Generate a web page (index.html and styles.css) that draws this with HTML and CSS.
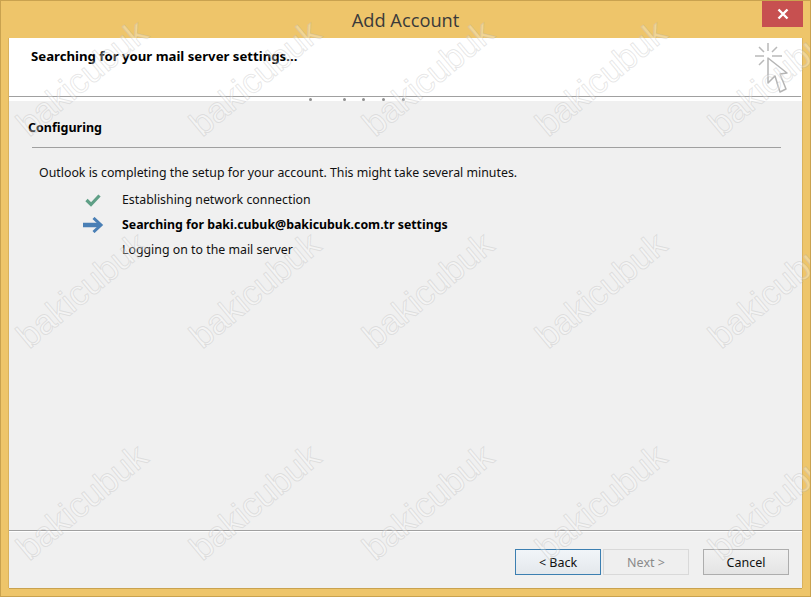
FILE: index.html
```html
<!DOCTYPE html>
<html lang="en">
<head>
<meta charset="utf-8">
<title>Add Account</title>
<link rel="stylesheet" href="styles.css">
</head>
<body>
<div class="window">
  <div class="titlebar">
    <div class="title">Add Account</div>
    <div class="close">
      <svg width="12" height="12" viewBox="0 0 12 12"><path d="M1.5 1.5L10.500 10.500M10.500 1.500L1.500 10.500" stroke="#fff" stroke-width="2.400" fill="none"/></svg>
    </div>
  </div>
  <div class="dialog">
    <div class="header">
      <div class="heading">Searching for your mail server settings...</div>
      <svg class="cursor" width="36" height="56" viewBox="0 0 36 56">
        <g stroke="#b9b9b9" stroke-width="1.500" fill="none">
          <path d="M15 0V8M2 13H11M19 13H29M6 4L11 9M24 4L19 9M6 22L11 17"/>
        </g>
        <path d="M15 15V40L22 33L27 49L33 46L27 31L34 30Z" fill="#fff" stroke="#b5b5b5" stroke-width="1.500" stroke-linejoin="round"/>
      </svg>
      <div class="rule"></div>
      <div class="dots"><i></i><i class="d2"></i><i class="d3"></i><i class="d3"></i><i class="d3"></i></div>
    </div>
    <div class="body">
      <div class="section">Configuring</div>
      <div class="section-rule"></div>
      <p class="intro">Outlook is completing the setup for your account. This might take several minutes.</p>
      <ul class="steps">
        <li>
          <span class="ico"><svg width="20" height="14" viewBox="0 0 20 14"><path d="M3.500 7L8 11.500L16.500 2.500" stroke="#5f9f86" stroke-width="3.200" fill="none"/></svg></span>
          <span>Establishing network connection</span>
        </li>
        <li class="current">
          <span class="ico"><svg width="22" height="16" viewBox="0 0 22 16"><path d="M1 8H18" stroke="#4a7fb5" stroke-width="4.500" fill="none"/><path d="M11.500 1L19 8L11.500 15" stroke="#4a7fb5" stroke-width="3" fill="none"/></svg></span>
          <span>Searching for baki.cubuk@bakicubuk.com.tr settings</span>
        </li>
        <li>
          <span class="ico"></span>
          <span>Logging on to the mail server</span>
        </li>
      </ul>
    </div>
    <div class="footer">
      <button class="btn focus">&lt; Back</button>
      <button class="btn off">Next &gt;</button>
      <button class="btn cancel">Cancel</button>
    </div>
  </div>
  <div class="marks" aria-hidden="true">
    <span>bakicubuk</span><span>bakicubuk</span><span>bakicubuk</span><span>bakicubuk</span><span>bakicubuk</span>
    <span>bakicubuk</span><span>bakicubuk</span><span>bakicubuk</span><span>bakicubuk</span><span>bakicubuk</span>
    <span>bakicubuk</span><span>bakicubuk</span><span>bakicubuk</span><span>bakicubuk</span><span>bakicubuk</span>
  </div>
</div>
</body>
</html>
```

FILE: styles.css
```css
* { box-sizing: border-box; }
html, body { margin: 0; padding: 0; overflow: hidden; }
body { width: 811px; height: 597px; font-family: "Noto Sans", "Open Sans", sans-serif; }
.window {
  position: relative;
  width: 811px;
  height: 597px;
  background: #eec56a;
  border: 1px solid #c9a24f;
  padding: 0 8px 8px 8px;
  display: flex;
  flex-direction: column;
  overflow: hidden;
}
.titlebar {
  height: 37px;
  flex: none;
  position: relative;
  display: flex;
  justify-content: center;
}
.title {
  font-family: "Open Sans", sans-serif;
  font-size: 18.300px;
  line-height: 24px;
  margin-top: 7px;
  color: #3a3a3a;
}
.close {
  position: absolute;
  top: 0;
  right: -1px;
  width: 41px;
  height: 26px;
  background: #c75050;
  display: flex;
  align-items: center;
  justify-content: center;
}
.dialog {
  flex: 1;
  display: flex;
  flex-direction: column;
  background: #f0f0f0;
  box-shadow: 0 1px 0 #c9a24f, -1px 0 0 #d9b25e, 1px 0 0 #d9b25e;
  min-height: 0;
}
.header {
  position: relative;
  height: 63px;
  flex: none;
  background: #fff;
  padding: 10px 22px 0;
}
.heading {
  font-size: 13.200px;
  font-weight: 700;
  line-height: 17px;
  color: #000;
}
.cursor { position: absolute; top: 5px; right: 13px; }
.rule {
  position: absolute;
  left: 0;
  right: 1px;
  top: 58px;
  height: 1px;
  background: #a0a0a0;
}
.dots {
  position: absolute;
  left: 300px;
  top: 60px;
  display: flex;
}
.dots i { width: 3px; height: 3px; border-radius: 50%; background: #8f8f8f; margin-right: 31px; }
.dots .d2 { margin-right: 16px; }
.dots .d3 { margin-right: 17px; }
.body { flex: 1; padding: 18px 21px 0 19px; }
.section {
  font-size: 12.500px;
  font-weight: 700;
  line-height: 17px;
  color: #000;
}
.section-rule {
  height: 1px;
  background: #a0a0a0;
  margin: 11px 0 0 4px;
}
.intro {
  margin: 16px 0 0 11px;
  font-size: 12.350px;
  line-height: 17px;
  color: #111;
}
.steps { list-style: none; margin: 6px 0 0 0; padding: 0 0 0 46px; }
.steps li {
  display: flex;
  align-items: center;
  height: 25px;
  font-size: 12.350px;
  color: #111;
}
.steps .current { font-weight: 700; color: #000; }
.ico { width: 48px; flex: none; display: flex; justify-content: center; padding-right: 10px; }
.footer {
  height: 58px;
  flex: none;
  border-top: 1px solid #a0a0a0;
  box-shadow: inset 0 1px 0 #fff;
  display: flex;
  padding: 18px 13px 0 506px;
  gap: 2px;
}
.btn {
  width: 86px;
  height: 26px;
  padding: 0;
  font-family: inherit;
  font-size: 12.500px;
  color: #111;
  background: linear-gradient(#f1f1f1, #e4e4e4);
  border: 1px solid #adadad;
}
.btn.focus { border-color: #3c7fb1; background: linear-gradient(#f1f5f9, #e4e8ec); }
.btn.off { color: #8a8a8a; background: #efefef; border-color: #d9d9d9; }
.btn.cancel { margin-left: 12px; }
.marks {
  position: absolute;
  left: 0;
  top: 0;
  width: 866px;
  height: 636px;
  display: grid;
  grid-template-columns: repeat(5, 173px);
  grid-template-rows: repeat(3, 212px);
  pointer-events: none;
}
.marks span {
  align-self: center;
  justify-self: center;
  transform: translate(-6px, -29px) rotate(-40deg);
  font-family: "Liberation Sans", sans-serif;
  font-size: 35px;
  line-height: 40px;
  color: rgba(255, 255, 255, 0.3);
  -webkit-text-stroke: 1px rgba(170, 170, 170, 0.28);
}
```
